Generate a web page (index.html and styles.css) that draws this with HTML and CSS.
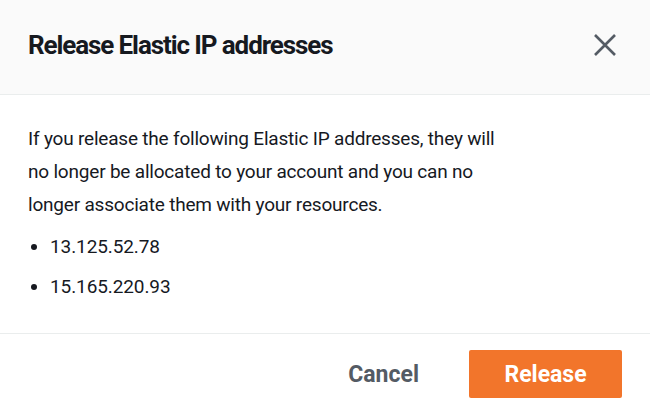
FILE: index.html
```html
<!DOCTYPE html>
<html>
<head>
<meta charset="utf-8">
<link rel="stylesheet" href="styles.css">
</head>
<body>
<div class="modal">
  <div class="header">
    <h2 class="title">Release Elastic IP addresses</h2>
    <button class="close" aria-label="Close">
      <svg width="24" height="24" viewBox="0 0 24 24"><path d="M2 2 L22 22 M22 2 L2 22" stroke="#545b64" stroke-width="2.6" fill="none"/></svg>
    </button>
  </div>
  <div class="body">
    <p class="text">If you release the following Elastic IP addresses, they will no longer be allocated to your account and you can no longer associate them with your resources.</p>
    <ul class="list">
      <li>13.125.52.78</li>
      <li>15.165.220.93</li>
    </ul>
  </div>
  <div class="footer">
    <button class="btn-link">Cancel</button>
    <button class="btn-primary">Release</button>
  </div>
</div>
</body>
</html>
```
FILE: styles.css
```css
* { box-sizing: border-box; }
html, body { margin: 0; padding: 0; background: #fff; }
body { font-family: Roboto, "Noto Sans", sans-serif; color: #16191f; width: 650px; height: 412px; overflow: hidden; }
.modal { display: flex; flex-direction: column; }
.header {
  height: 95px;
  background: #fafafa;
  border-bottom: 1px solid #eaeded;
  display: flex;
  align-items: center;
  justify-content: space-between;
  padding: 0 33px 4px 28px;
}
.title { margin: 0; font-size: 26px; font-weight: 700; letter-spacing: -1.1px; }
.close { border: 0; background: none; padding: 0; width: 24px; height: 24px; display: flex; cursor: pointer; }
.body { padding: 27px 28px 0 28px; height: 239px; border-bottom: 1px solid #eaeded; }
.text { margin: 0; max-width: 476px; font-size: 19px; letter-spacing: -0.2px; line-height: 33px; }
.list { margin: 6px 0 0 0; padding: 0 0 0 22px; font-size: 19px; letter-spacing: -0.1px; line-height: 40px; }
.footer { display: flex; justify-content: flex-end; align-items: center; padding: 16px 28px 0 0; gap: 50px; }
.btn-link { border: 0; background: none; font-family: inherit; font-size: 23px; font-weight: 700; color: #545b64; padding: 0; }
.btn-primary { border: 0; background: #f2752b; color: #fff; font-family: inherit; font-size: 23px; font-weight: 700; width: 153px; height: 48px; border-radius: 2px; }
```
